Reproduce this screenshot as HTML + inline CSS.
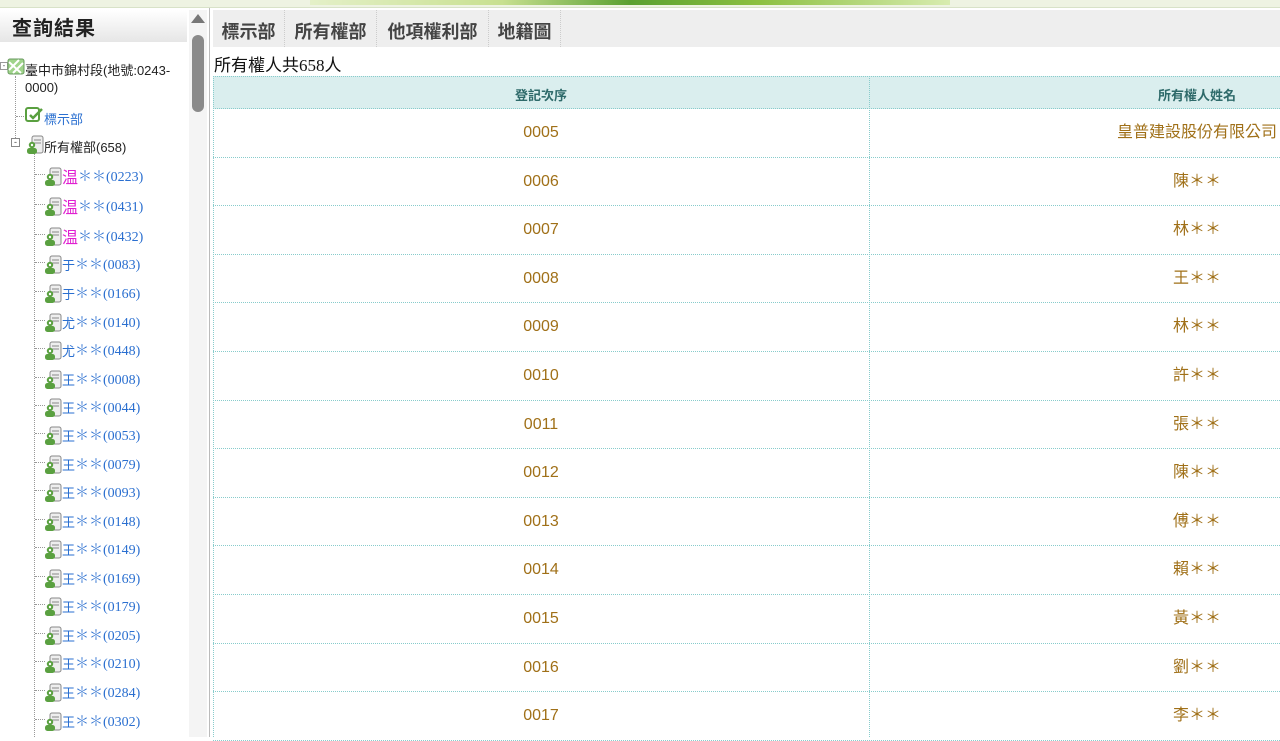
<!DOCTYPE html>
<html><head><meta charset="utf-8"><style>
*{margin:0;padding:0;box-sizing:border-box}
body{width:1280px;height:737px;overflow:hidden;background:#fff;font-family:"Liberation Sans","Noto Sans CJK TC",sans-serif;position:relative}
.top{position:absolute;left:0;top:0;width:1280px;height:8px;background:#eef3e2;border-bottom:1px solid #d8e2c8}
.topimg{position:absolute;left:310px;top:0;width:640px;height:5px;background:linear-gradient(90deg,#e4f0c8,#c8e090 30%,#5aa030 50%,#8cc040 70%,#d8ecb0)}
.hdr{position:absolute;left:0;top:10px;width:187px;height:32px;background:linear-gradient(#fff,#e6e6e6);font-size:20px;font-weight:bold;color:#222;padding:2px 0 0 12px;letter-spacing:1px}
.sb{position:absolute;left:189px;top:10px;width:18px;height:727px;background:#f4f4f4}
.thumb{position:absolute;left:192px;top:35px;width:12px;height:77px;background:#8a8a8a;border-radius:6px}
.arrow{position:absolute;left:191px;top:14px;width:0;height:0;border-left:7px solid transparent;border-right:7px solid transparent;border-bottom:9px solid #777}
.sep{position:absolute;left:209px;top:8px;width:1px;height:729px;background:#bbb}
.tree{position:absolute;font-size:13px;white-space:nowrap}
.ti{position:absolute;left:43px;height:22px;display:flex;align-items:center}
.ti span.c{color:#2a6fd0;font-size:14px;font-family:"Liberation Serif","Noto Serif CJK SC",serif}
.vl{position:absolute;border-left:1px dotted #999}
.hl{position:absolute;border-top:1px dotted #999;width:10px}
.tabs{position:absolute;left:213px;top:10px;width:1067px;height:37px;background:#eeeeee}
.tab{position:absolute;top:0;height:37px;font-size:18px;font-weight:bold;color:#444;padding-top:8px;text-align:center;border-right:1px dotted #ccc}
.cnt{position:absolute;left:214px;top:51px;font-size:17px;color:#111;font-family:"Liberation Serif","Noto Sans CJK TC",serif}
.th{position:absolute;left:213px;top:76px;width:1067px;height:33px;background:#daeeee;border-top:1px dotted #8cc;border-bottom:1px dotted #8cc;font-size:13px;color:#2e6a6a;font-weight:bold}
.cell{position:absolute;text-align:center;top:0}
.row{position:absolute;left:213px;width:1067px;border-bottom:1px dotted #8cc;color:#a07018;font-size:16px}
.vd{position:absolute;left:869px;top:76px;height:661px;border-left:1px dotted #8cc}
.vd0{position:absolute;left:213px;top:76px;height:661px;border-left:1px dotted #8cc}
</style></head><body>
<div class="top"></div><div class="topimg"></div>
<div class="hdr">查詢結果</div>
<div class="sb"></div><div class="arrow"></div><div class="thumb"></div>
<div class="sep"></div>

<div class="tree" style="left:0;top:0;width:188px;height:737px">
<div class="vl" style="left:15px;top:76px;height:70px"></div>
<div class="vl" style="left:34px;top:152px;height:585px"></div>
<div style="position:absolute;left:0;top:62px;width:8px;height:8px;border:1px solid #999;font-size:8px;line-height:6px;text-align:center;color:#555">-</div>
<svg style="position:absolute;left:7px;top:58px" width="18" height="17"><rect x="1" y="1" width="16" height="15" rx="2" fill="#9fd48a" stroke="#6a9a60"/><path d="M2 12 L12 2 M6 15 L16 5 M2 4 L14 15" stroke="#fff" stroke-width="2"/></svg>
<div style="position:absolute;left:25px;top:62px;font-size:13px;line-height:17px;color:#222;width:160px">臺中市錦村段(地號:0243-<br>0000)</div>
<div class="hl" style="left:16px;top:116px"></div>
<svg style="position:absolute;left:25px;top:106px" width="18" height="17"><rect x="1" y="2" width="13" height="13" rx="2" fill="#fff" stroke="#5aa040" stroke-width="2"/><path d="M5 9 L8 12 L17 3" stroke="#5aa040" stroke-width="2.5" fill="none"/></svg>
<div style="position:absolute;left:44px;top:109px;color:#2a6fd0;font-size:13px">標示部</div>
<div style="position:absolute;left:11px;top:138px;width:9px;height:9px;border:1px solid #888;background:#fff;font-size:9px;line-height:6px;text-align:center;color:#444">-</div>
<svg style="position:absolute;left:25px;top:135px" width="19" height="19"><rect x="7" y="1" width="11" height="17" rx="2" fill="#eee" stroke="#888"/><path d="M9 5h7M9 8h7" stroke="#888"/><circle cx="7" cy="10" r="3.2" fill="#5aa040"/><rect x="2" y="13" width="10" height="6" rx="2.5" fill="#5aa040"/><circle cx="7" cy="10" r="1.2" fill="#fff"/></svg>
<div style="position:absolute;left:44px;top:137px;color:#222;font-size:13px">所有權部(658)</div>
</div>

<div id="items"></div>

<div class="tabs">
<div class="tab" style="left:0;width:72px">標示部</div>
<div class="tab" style="left:72px;width:92px">所有權部</div>
<div class="tab" style="left:164px;width:112px">他項權利部</div>
<div class="tab" style="left:276px;width:72px">地籍圖</div>
</div>
<div class="cnt">所有權人共658人</div>
<div class="th"><div class="cell" style="left:0;width:656px;top:8px">登記次序</div><div class="cell" style="left:656px;width:656px;top:8px">所有權人姓名</div></div>
<div id="rows"></div>
<div class="vd0"></div><div class="vd"></div>

<script>
var it=[["温","0223",1],["温","0431",1],["温","0432",1],["于","0083"],["于","0166"],["尤","0140"],["尤","0448"],["王","0008"],["王","0044"],["王","0053"],["王","0079"],["王","0093"],["王","0148"],["王","0149"],["王","0169"],["王","0179"],["王","0205"],["王","0210"],["王","0284"],["王","0302"]];
var ys=[177,207,237,265,294,323,351,380,408,436,465,493,522,550,579,607,636,664,693,722];
var h="";
var icon='<svg width="19" height="19"><rect x="7" y="1" width="11" height="17" rx="2" fill="#eee" stroke="#888"/><path d="M9 5h7M9 8h7" stroke="#888"/><circle cx="7" cy="10" r="3.2" fill="#5aa040"/><rect x="2" y="13" width="10" height="6" rx="2.5" fill="#5aa040"/><circle cx="7" cy="10" r="1.2" fill="#fff"/></svg>';
for(var i=0;i<it.length;i++){var a=it[i];
h+='<div class="hl" style="position:absolute;left:35px;top:'+(ys[i]-3)+'px"></div>';
h+='<div class="ti tree" style="top:'+(ys[i]-12)+'px">'+icon+'<span style="color:'+(a[2]?'#e020d0;font-size:16px':'#2a6fd0;font-size:13px')+'">'+a[0]+'</span><span class="c">＊＊('+a[1]+')</span></div>';}
document.getElementById('items').innerHTML=h;
var nm=["皇普建設股份有限公司","陳＊＊","林＊＊","王＊＊","林＊＊","許＊＊","張＊＊","陳＊＊","傅＊＊","賴＊＊","黃＊＊","劉＊＊","李＊＊"];
var r="";
for(var j=0;j<13;j++){var t=109+j*48.6;var num=("000"+(5+j)).slice(-4);
r+='<div class="row" style="top:'+t+'px;height:48.6px;line-height:47px"><div class="cell" style="left:0;width:656px">'+num+'</div><div class="cell" style="left:656px;width:656px">'+nm[j]+'</div></div>';}
document.getElementById('rows').innerHTML=r;
</script>
</body></html>
